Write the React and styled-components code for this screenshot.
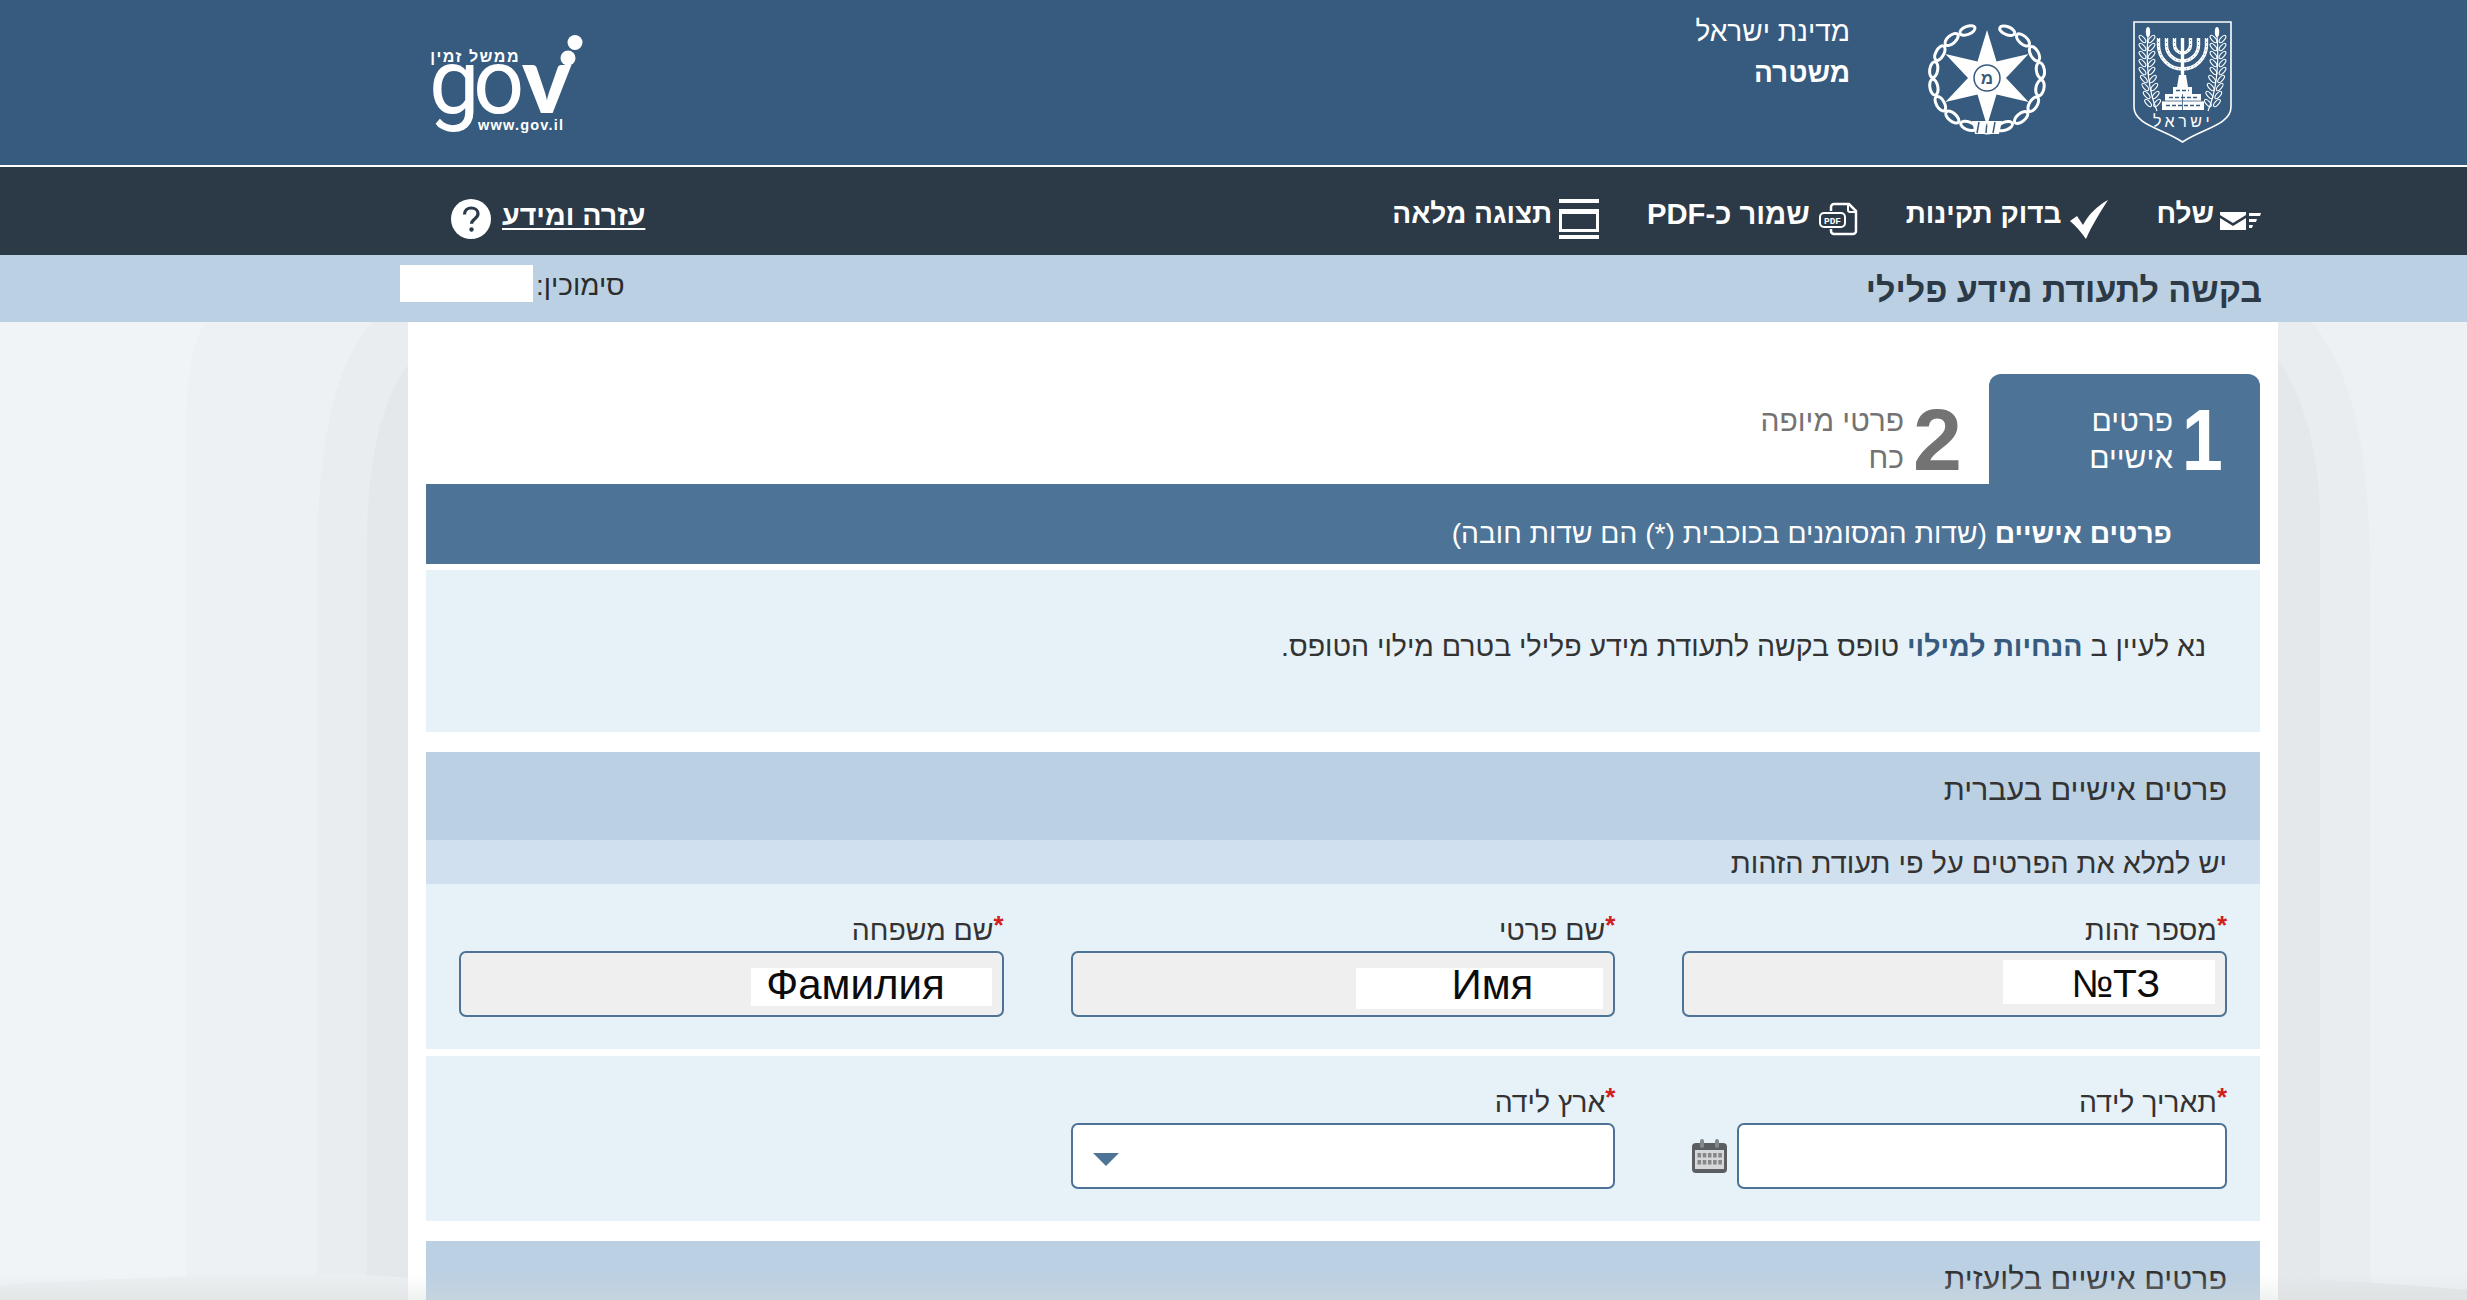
import React from 'react';
import styled, { createGlobalStyle } from 'styled-components';

const GlobalStyle = createGlobalStyle`
  html, body {
    margin: 0;
    padding: 0;
    height: 1300px;
    overflow: hidden;
    background: #edf1f4;
  }
  body {
    font-family: "Liberation Sans", Arial, sans-serif;
    color: #333;
  }
  #root {
    height: 1300px;
    overflow: hidden;
  }
`;

const Page = styled.div`
  position: relative;
  width: 2467px;
  height: 1300px;
  overflow: hidden;
  direction: rtl;
`;

const Backdrop = styled.svg`
  position: absolute;
  top: 0;
  left: 0;
`;

const BottomFade = styled.div`
  position: absolute;
  left: 0;
  right: 0;
  bottom: 0;
  height: 26px;
  background: linear-gradient(rgba(215, 218, 218, 0), rgba(215, 218, 218, 0.38));
  pointer-events: none;
`;

const Content = styled.div`
  position: relative;
`;

const Header = styled.header`
  height: 165px;
  box-sizing: content-box;
  border-bottom: 2px solid #fff;
  background: #365b7e;
  display: flex;
  align-items: flex-start;
  padding: 0 235px 0 430px;
`;

const ShieldWrap = styled.div`
  margin-top: 21px;
  margin-left: 87px;
  line-height: 0;
`;

const BadgeWrap = styled.div`
  margin-top: 21px;
  margin-left: 77px;
  line-height: 0;
`;

const Ministry = styled.div`
  padding-top: 11px;
  color: #fff;
  font-size: 28px;
  line-height: 41px;
`;

const MinistryName = styled.div`
  font-weight: ${p => (p.$bold ? 700 : 400)};
`;

const LogoWrap = styled.div`
  margin-top: 35px;
  margin-right: auto;
  line-height: 0;
  svg {
    overflow: visible;
  }
`;

const NavBar = styled.nav`
  height: 88px;
  box-sizing: border-box;
  background: #2c3946;
  display: flex;
  align-items: center;
  gap: 48px;
  padding: 16px 206px 0 451px;
`;

const NavItem = styled.a`
  display: flex;
  align-items: center;
  gap: ${p => p.$gap || 7}px;
  color: #fff;
  font-size: ${p => p.$size || 28}px;
  font-weight: 700;
  white-space: nowrap;
  span {
    margin-bottom: 10px;
  }
`;

const HelpLink = styled(NavItem)`
  margin-right: auto;
  gap: 11px;
  span {
    margin-bottom: 8px;
    text-decoration: underline;
    text-underline-offset: 3px;
  }
`;

const TitleBar = styled.div`
  height: 67px;
  background: #bbd0e2;
  display: flex;
  justify-content: space-between;
  padding: 0 205px 0 400px;
`;

const PageTitle = styled.h1`
  margin: 16px 0 0;
  color: #2c3946;
  font-size: 34px;
  line-height: 38px;
  font-weight: 700;
`;

const Reference = styled.div`
  display: flex;
  align-items: flex-start;
  gap: 3px;
  padding-top: 10px;
  font-size: 28px;
  line-height: 42px;
  color: #2b2b2b;
`;

const ReferenceBox = styled.div`
  width: 133px;
  height: 37px;
  background: #fff;
`;

const Sheet = styled.main`
  width: 1834px;
  height: 978px;
  margin-right: 189px;
  padding: 52px 18px 0;
  background: #fff;
  overflow: hidden;
`;

const Tabs = styled.div`
  display: flex;
  height: 110px;
`;

const Tab = styled.div`
  width: ${p => (p.$active ? 271 : 250)}px;
  box-sizing: border-box;
  display: flex;
  gap: ${p => (p.$active ? 1 : 9)}px;
  padding: 21px ${p => (p.$active ? 37 : 27)}px 0 0;
  border-radius: 12px 12px 0 0;
  background: ${p => (p.$active ? '#4d7397' : 'transparent')};
  color: ${p => (p.$active ? '#fff' : '#737373')};
`;

const TabNumber = styled.div`
  font-size: 88px;
  line-height: 90px;
  font-weight: 700;
  transform: scaleX(${p => (p.$narrow ? 0.84 : 1)});
  transform-origin: right center;
`;

const TabLabel = styled.div`
  width: ${p => p.$width}px;
  padding-top: 7px;
  font-size: 30px;
  line-height: 37px;
`;

const StepBand = styled.div`
  height: 80px;
  box-sizing: border-box;
  padding: 31px 88px 0 0;
  background: #4d7397;
  color: #fff;
  font-size: 28.2px;
  line-height: 36px;
`;

const Notice = styled.div`
  height: 162px;
  box-sizing: border-box;
  margin-top: 6px;
  padding: 58px 54px 0 0;
  background: #e6f1f8;
  color: #333;
  font-size: 28.5px;
  line-height: 36px;
`;

const NoticeLink = styled.a`
  color: #365b7e;
  font-weight: 700;
`;

const SectionHead = styled.div`
  height: 88px;
  box-sizing: border-box;
  margin-top: ${p => p.$top}px;
  padding: 19px 33px 0 0;
  background: #bbd0e2;
  color: #333;
  font-size: 30.5px;
  line-height: 36px;
`;

const SectionNote = styled.div`
  height: 44px;
  box-sizing: border-box;
  padding: 5px 33px 0 0;
  background: #d0e0ee;
  color: #333;
  font-size: 28.9px;
  line-height: 36px;
`;

const FieldRow = styled.div`
  height: 165px;
  box-sizing: border-box;
  margin-top: ${p => p.$top || 0}px;
  padding: 33px 33px 0;
  background: #e6f1f8;
  display: grid;
  grid-template-columns: repeat(3, 1fr);
  column-gap: 67px;
`;

const Field = styled.div`
  min-width: 0;
`;

const Label = styled.label`
  display: block;
  height: 34px;
  font-size: 28.4px;
  line-height: 26px;
  color: #333;
`;

const Star = styled.span`
  color: #d0201a;
  font-size: 26px;
  font-weight: 700;
  vertical-align: 6px;
  line-height: 0;
`;

const InputBox = styled.div`
  flex: 1;
  height: 66px;
  box-sizing: border-box;
  border: 2px solid #4d7397;
  border-radius: 7px;
  background: ${p => (p.$disabled ? '#efefef' : '#fff')};
  display: flex;
  padding-right: 10px;
`;

const Redaction = styled.div`
  width: ${p => p.$width}px;
  height: ${p => p.$height}px;
  margin-top: ${p => p.$top}px;
  box-sizing: border-box;
  padding-right: ${p => p.$inset}px;
  background: #fff;
  direction: ltr;
  text-align: right;
  color: #0c0c0c;
  font-size: ${p => p.$size}px;
  line-height: ${p => p.$line}px;
`;

const DateWrap = styled.div`
  display: flex;
  align-items: center;
  gap: 10px;
  padding-left: 10px;
`;

const SelectBox = styled(InputBox)`
  justify-content: flex-end;
  padding: 28px 0 0 20px;
`;

const Caret = styled.div`
  width: 0;
  height: 0;
  border-left: 13px solid transparent;
  border-right: 13px solid transparent;
  border-top: 13px solid #4d7397;
`;

const MailIcon = () => (
  <svg width="41" height="24" viewBox="0 0 41 24">
    <path d="M0 5h26v3L13 16 0 8z M0 11l13 8 13-8v12H0z" fill="#fff" />
    <path d="M29 6h12l-1 3H29z M29 12h8l-1 3h-7z M29 18h4l-1 3h-3z" fill="#fff" />
  </svg>
);

const CheckIcon = () => (
  <svg width="38" height="39" viewBox="0 0 38 39">
    <path d="M0 21l7-5 6 9C19 14 27 6 38 0 31 11 22 25 16 39 11 32 6 26 0 21z" fill="#fff" />
  </svg>
);

const PdfIcon = () => (
  <svg width="39" height="34" viewBox="0 0 39 34">
    <path d="M12 9V5a3 3 0 0 1 3-3h15l7 7v20a3 3 0 0 1-3 3H15a3 3 0 0 1-3-3v-2" fill="none" stroke="#fff" strokeWidth="2.5" />
    <path d="M29 2v6a2 2 0 0 0 2 2h6" fill="none" stroke="#fff" strokeWidth="2" />
    <rect x="1" y="11" width="25" height="14" rx="4" fill="#2c3946" stroke="#fff" strokeWidth="2" />
    <text x="13.5" y="22" textAnchor="middle" direction="ltr" fill="#fff" fontFamily="Liberation Mono, monospace" fontSize="9.5" fontWeight="700">PDF</text>
  </svg>
);

const FullViewIcon = () => (
  <svg width="40" height="40" viewBox="0 0 40 40">
    <rect x="0" y="0" width="40" height="4" fill="#fff" />
    <rect x="0" y="36" width="40" height="4" fill="#fff" />
    <rect x="1.5" y="11.5" width="37" height="20" fill="none" stroke="#fff" strokeWidth="3" />
    <rect x="0" y="10" width="40" height="5" fill="#fff" />
  </svg>
);

const HelpIcon = () => (
  <svg width="40" height="40" viewBox="0 0 40 40">
    <circle cx="20" cy="20" r="20" fill="#fff" />
    <path d="M13.5 15.5c0-4 3-6.5 6.8-6.5s6.7 2.400 6.7 5.800c0 5-6.500 5.200-6.500 10" fill="none" stroke="#2c3946" strokeWidth="3.200" />
    <circle cx="20.500" cy="30.500" r="2.200" fill="#2c3946" />
  </svg>
);

const CalendarIcon = () => (
  <svg width="35" height="34" viewBox="0 0 35 34">
    <rect x="0" y="4" width="35" height="30" rx="4" fill="#5c5f62" />
    <rect x="3" y="11" width="29" height="19" fill="#d5d7d8" />
    {[0, 1].map(r =>
      [0, 1, 2, 3, 4].map(c => (
        <rect key={`${r}-${c}`} x={5.5 + c * 5.2} y={14 + r * 7} width="3.600" height="4.500" fill="#85888a" />
      ))
    )}
    <rect x="8" y="0" width="4" height="9" rx="2" fill="#85888a" />
    <rect x="23" y="0" width="4" height="9" rx="2" fill="#85888a" />
  </svg>
);

// olive branch beside the menorah
const Branch = ({ flip }) => {
  const rows = [0, 1, 2, 3, 4, 5, 6, 7, 8];
  return (
    <g transform={flip ? 'translate(99 0) scale(-1 1)' : undefined}>
      <path d="M15 14 C13 40 14 66 24 90" fill="none" stroke="#fff" strokeWidth="1.200" />
      <ellipse cx="15" cy="11" rx="2.200" ry="5" fill="#fff" />
      {rows.map(i => {
        const y = 18 + i * 8;
        const x = 14 + (i > 4 ? (i - 4) * 1.4 : 0);
        return (
          <g key={i}>
            <ellipse cx={x - 4.500} cy={y} rx="4.500" ry="1.900" fill="none" stroke="#fff" strokeWidth="1.100" transform={`rotate(48 ${x - 4.500} ${y})`} />
            <ellipse cx={x + 4.500} cy={y} rx="4.500" ry="1.900" fill="none" stroke="#fff" strokeWidth="1.100" transform={`rotate(-48 ${x + 4.500} ${y})`} />
          </g>
        );
      })}
    </g>
  );
};

const StateEmblem = () => (
  <svg width="99" height="122" viewBox="0 0 99 122">
    <path d="M1 1H98V86C98 104 68 108 49.500 121 31 108 1 104 1 86Z" fill="none" stroke="#fff" strokeWidth="1.600" />
    <Branch />
    <Branch flip />
    {[8, 16, 24].map(r => (
      <path key={r} d={`M${49.5 - r} 17V24A${r} ${r} 0 0 0 ${49.5 + r} 24V17`} fill="none" stroke="#fff" strokeWidth="3.400" />
    ))}
    {[8, 16, 24].map(r => (
      <path key={`d${r}`} d={`M${49.5 - r} 17V24A${r} ${r} 0 0 0 ${49.5 + r} 24V17`} fill="none" stroke="#365b7e" strokeWidth="0.800" strokeDasharray="1 3" />
    ))}
    <path d="M49.500 17V62" stroke="#fff" strokeWidth="3.400" />
    <path d="M46 54h7l2 12H44z" fill="#fff" />
    <rect x="40" y="66" width="19" height="7" fill="#fff" />
    <rect x="32" y="73" width="36" height="7" fill="#fff" />
    <rect x="29" y="80" width="42" height="9" fill="#fff" />
    <path d="M43 69.500h13M36 76.500h28M33 84.500h34" stroke="#365b7e" strokeWidth="1.400" strokeDasharray="4 2" />
    <path d="M29 80h42M49.500 73v16" stroke="#365b7e" strokeWidth="0.800" />
    <text x="50" y="106" textAnchor="middle" direction="rtl" fill="#fff" fontFamily="Liberation Sans, sans-serif" fontSize="16" letterSpacing="3.500">ישראל</text>
  </svg>
);

// police badge: six point star inside a chain wreath
const starPoints = (() => {
  const pts = [];
  for (let i = 0; i < 12; i++) {
    const a = (i * 30 - 90) * (Math.PI / 180);
    const r = i % 2 === 0 ? 48 : 19;
    pts.push(`${(60 + r * Math.cos(a)).toFixed(1)},${(57 + r * Math.sin(a)).toFixed(1)}`);
  }
  return pts.join(' ');
})();

const chainLinks = Array.from({ length: 17 }, (_, i) => {
  const deg = 22 + i * 19.800;
  const a = ((deg - 90) * Math.PI) / 180;
  return { deg, x: 60 + 54 * Math.cos(a), y: 57 + 51 * Math.sin(a) };
});

const PoliceBadge = () => (
  <svg width="119" height="114" viewBox="0 0 119 114">
    {chainLinks.map(l => (
      <ellipse key={l.deg} cx={l.x} cy={l.y} rx="8" ry="4" fill="none" stroke="#fff" strokeWidth="3" transform={`rotate(${l.deg} ${l.x} ${l.y})`} />
    ))}
    <path d="M45 100h30l-3 13H48z" fill="#fff" />
    <path d="M52 101l-2 11M60 101l-1 11M68 101l-2 11" stroke="#365b7e" strokeWidth="1.500" />
    <polygon points={starPoints} fill="#fff" />
    <circle cx="60" cy="57" r="13" fill="#fff" stroke="#365b7e" strokeWidth="1.500" />
    <text x="60" y="63" textAnchor="middle" fill="#365b7e" fontFamily="Liberation Sans, sans-serif" fontSize="17" fontWeight="700">מ</text>
  </svg>
);

const GovLogo = () => (
  <svg width="153" height="98" viewBox="0 0 153 98" direction="ltr">
    <text x="90" y="27" textAnchor="end" fill="#fff" fontFamily="Liberation Sans, sans-serif" fontSize="16" fontWeight="700" letterSpacing="1.500">ממשל זמין</text>
    <text x="-1" y="78" fill="#fff" fontFamily="Roboto, sans-serif" fontSize="90">g</text>
    <text x="43" y="78" fill="#fff" fontFamily="Roboto, sans-serif" fontSize="90">o</text>
    <text x="92" y="78" fill="#fff" fontFamily="Lato, sans-serif" fontSize="93" fontWeight="900">v</text>
    <text x="48" y="95" fill="#fff" fontFamily="Liberation Sans, sans-serif" fontSize="14.500" fontWeight="700" letterSpacing="1.200">www.gov.il</text>
    <circle cx="145" cy="7.500" r="7.500" fill="#fff" />
    <circle cx="138" cy="23" r="7.500" fill="#fff" />
  </svg>
);

const Background = () => (
  <Backdrop width="2467" height="1300" viewBox="0 0 2467 1300">
    <rect width="2467" height="1300" fill="#edf1f4" />
    <path d="M0 322H206Q186 350 186 430V1300H0Z" fill="#f0f4f7" />
    <path d="M373 322Q317 380 317 565V1300H408V322Z" fill="#e9edf0" />
    <path d="M408 365Q367 420 367 545V1300H408Z" fill="#e4e8eb" />
    <path d="M2312 322Q2370 390 2370 570V1300H2278V322Z" fill="#e9edf0" />
    <path d="M2278 360Q2320 420 2320 525V1300H2278Z" fill="#e4e8eb" />
    <path d="M0 1285Q300 1268 408 1278V1300H0Z" fill="#ebeff1" />
    <path d="M2278 1278Q2380 1282 2467 1290V1300H2278Z" fill="#e5e8ea" />
  </Backdrop>
);

export default function App() {
  return (
    <Page>
      <GlobalStyle />
      <Background />
      <Content>
        <Header>
          <ShieldWrap><StateEmblem /></ShieldWrap>
          <BadgeWrap><PoliceBadge /></BadgeWrap>
          <Ministry>
            <MinistryName>מדינת ישראל</MinistryName>
            <MinistryName $bold>משטרה</MinistryName>
          </Ministry>
          <LogoWrap><GovLogo /></LogoWrap>
        </Header>

        <NavBar>
          <NavItem $gap={6}><MailIcon /><span>שלח</span></NavItem>
          <NavItem $gap={9}><CheckIcon /><span>בדוק תקינות</span></NavItem>
          <NavItem $gap={9} $size={29.2}><PdfIcon /><span>שמור כ-PDF</span></NavItem>
          <NavItem $gap={7}><FullViewIcon /><span>תצוגה מלאה</span></NavItem>
          <HelpLink $size={28.6}><span>עזרה ומידע</span><HelpIcon /></HelpLink>
        </NavBar>

        <TitleBar>
          <PageTitle>בקשה לתעודת מידע פלילי</PageTitle>
          <Reference>
            <span>סימוכין:</span>
            <ReferenceBox />
          </Reference>
        </TitleBar>

        <Sheet>
          <Tabs>
            <Tab $active>
              <TabNumber $narrow>1</TabNumber>
              <TabLabel $width={100}>פרטים אישיים</TabLabel>
            </Tab>
            <Tab>
              <TabNumber>2</TabNumber>
              <TabLabel $width={160}>פרטי מיופה כח</TabLabel>
            </Tab>
          </Tabs>
          <StepBand>
            <strong>פרטים אישיים</strong> (שדות המסומנים בכוכבית (*) הם שדות חובה)
          </StepBand>
          <Notice>
            נא לעיין ב <NoticeLink>הנחיות למילוי</NoticeLink> טופס בקשה לתעודת מידע פלילי בטרם מילוי הטופס.
          </Notice>

          <SectionHead $top={20}>פרטים אישיים בעברית</SectionHead>
          <SectionNote>יש למלא את הפרטים על פי תעודת הזהות</SectionNote>
          <FieldRow>
            <Field>
              <Label><Star>*</Star>מספר זהות</Label>
              <InputBox $disabled>
                <Redaction $width={212} $height={44} $top={7} $inset={55} $line={48} $size={39}>№ТЗ</Redaction>
              </InputBox>
            </Field>
            <Field>
              <Label><Star>*</Star>שם פרטי</Label>
              <InputBox $disabled>
                <Redaction $width={247} $height={41} $top={15} $inset={70} $line={34} $size={42}>Имя</Redaction>
              </InputBox>
            </Field>
            <Field>
              <Label><Star>*</Star>שם משפחה</Label>
              <InputBox $disabled>
                <Redaction $width={241} $height={38} $top={15} $inset={47} $line={34} $size={42}>Фамилия</Redaction>
              </InputBox>
            </Field>
          </FieldRow>
          <FieldRow $top={7}>
            <Field>
              <Label><Star>*</Star>תאריך לידה</Label>
              <DateWrap>
                <InputBox />
                <CalendarIcon />
              </DateWrap>
            </Field>
            <Field>
              <Label><Star>*</Star>ארץ לידה</Label>
              <SelectBox><Caret /></SelectBox>
            </Field>
          </FieldRow>

          <SectionHead $top={20}>פרטים אישיים בלועזית</SectionHead>
        </Sheet>
      </Content>
      <BottomFade />
    </Page>
  );
}
